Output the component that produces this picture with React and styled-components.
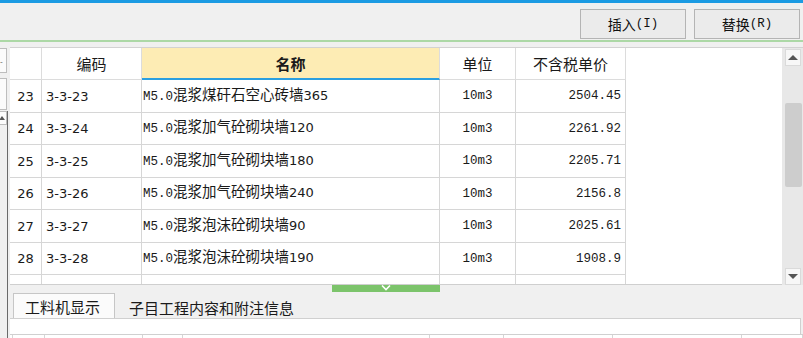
import React from "react";
import styled, { createGlobalStyle } from "styled-components";

const Global = createGlobalStyle`
  html, body { margin: 0; padding: 0; background: #f0f0f0; }
  body { font-family: "Noto Sans CJK SC", "Noto Sans", sans-serif; }
`;

const Page = styled.div`
  width: 803px;
  height: 338px;
  overflow: hidden;
  background: #f0f0f0;
  display: flex;
  flex-direction: column;
`;

const TopBar = styled.div`
  height: 3px;
  background: #1b9be3;
`;

const Toolbar = styled.div`
  height: 39px;
  display: flex;
  justify-content: flex-end;
  align-items: center;
  gap: 8px;
  padding-right: 3px;
  border-bottom: 2px solid #acd8a6;
  box-sizing: border-box;
`;

const ToolButton = styled.button`
  width: 106px;
  height: 30px;
  margin-top: 4px;
  background: #ebebeb;
  border: 1px solid #b4b4b4;
  font-family: "Noto Sans CJK SC", sans-serif;
  font-size: 14px;
  color: #111;
  padding: 0;
  display: flex;
  align-items: center;
  justify-content: center;
`;

const Mono = styled.span`
  font-family: "Liberation Mono", monospace;
  font-size: 12.5px;
`;

const Digits = styled.span`
  font-family: "DejaVu Sans", sans-serif;
  font-size: 13px;
`;

const Body = styled.div`
  flex: 1;
  display: flex;
  padding-top: 5px;
`;

const LeftStrip = styled.div`
  width: 10px;
  display: flex;
  flex-direction: column;
  gap: 5px;
  padding-top: 1px;
`;

const StripBox = styled.div`
  width: 7px;
  height: ${({ h }) => h}px;
  background: #fbfbfb;
  border: 1px solid #bdbdbd;
  border-left: none;
  box-sizing: border-box;
  color: #555;
  font-size: 8px;
  line-height: ${({ h }) => h}px;
  overflow: hidden;
`;

const StripRail = styled.div`
  flex: 1;
  width: 8px;
  border-right: 1px solid #6a6a6a;
  box-sizing: border-box;
  margin-top: -4px;
`;

const RailArrow = styled.div`
  width: 7px;
  height: 14px;
  background: #fbfbfb;
  border: 1px solid #bdbdbd;
  border-left: none;
  box-sizing: border-box;
  display: flex;
  align-items: center;
  justify-content: center;
  &::after {
    content: "";
    border-left: 3px solid transparent;
    border-right: 3px solid transparent;
    border-bottom: 4px solid #555;
    margin-left: -3px;
  }
`;

const Main = styled.div`
  flex: 1;
  display: flex;
  flex-direction: column;
`;

const GridWrap = styled.div`
  height: 238px;
  display: flex;
  border-top: 1px solid #d2d2d2;
  box-sizing: border-box;
  background: #fff;
`;

const GridBody = styled.div`
  flex: 1;
  overflow: hidden;
  border-bottom: 1px solid #cfcfcf;
`;

const cols = "32px 100px 298px 76px 110px";

const Row = styled.div`
  display: grid;
  grid-template-columns: ${cols};
  height: ${({ h }) => h}px;
`;

const Cell = styled.div`
  border-right: 1px solid #d6d6d6;
  border-bottom: 1px solid #d6d6d6;
  box-sizing: border-box;
  display: flex;
  align-items: center;
  justify-content: ${({ align }) =>
    align === "right" ? "flex-end" : align === "left" ? "flex-start" : "center"};
  padding: 0 4px;
  font-size: ${({ mono }) => (mono ? "12.5px" : "13px")};
  color: #1a1a1a;
  white-space: nowrap;
  overflow: hidden;
  font-family: ${({ mono }) =>
    mono ? '"Liberation Mono", monospace' : '"DejaVu Sans", sans-serif'};
`;

const NameCell = styled(Cell)`
  font-family: "Noto Sans CJK SC", sans-serif;
  font-size: 14.5px;
  padding-left: 1px;
  & > span {
    line-height: 1;
    margin-top: -2px;
  }
`;

const HeadCell = styled.div`
  border-right: 1px solid #dcdcdc;
  border-bottom: ${({ active }) => (active ? "2px solid #2b9fe0" : "1px solid #dcdcdc")};
  background: ${({ active }) => (active ? "#fdecb4" : "#fff")};
  box-sizing: border-box;
  display: flex;
  align-items: center;
  justify-content: center;
  font-family: "Noto Sans CJK SC", sans-serif;
  font-size: 15px;
  font-weight: ${({ active }) => (active ? 700 : 400)};
  color: #1a1a1a;
  padding-top: ${({ active }) => (active ? "1px" : "0")};
`;

const ScrollBar = styled.div`
  width: 21px;
  background: #e8e8e8;
  display: flex;
  flex-direction: column;
  align-items: center;
  padding: 1px 0 0 1px;
  box-sizing: border-box;
`;

const ScrollBtn = styled.div`
  width: 16px;
  height: 17px;
  background: #f7f7f7;
  border: 1px solid #dadada;
  box-sizing: border-box;
  display: flex;
  align-items: center;
  justify-content: center;
  &::after {
    content: "";
    border-left: 5px solid transparent;
    border-right: 5px solid transparent;
    ${({ down }) =>
      down ? "border-top: 5px solid #555;" : "border-bottom: 5px solid #555;"}
  }
`;

const Thumb = styled.div`
  width: 17px;
  height: 84px;
  margin-top: 37px;
  background: #cdcdcd;
  border-radius: 2px;
`;

const Spacer = styled.div`
  flex: 1;
`;

const Splitter = styled.div`
  height: 7px;
  display: flex;
`;

const Handle = styled.div`
  width: 108px;
  height: 7px;
  margin-left: 322px;
  background: #7cc46b;
  display: flex;
  justify-content: center;
  svg { display: block; }
`;

const TabRow = styled.div`
  height: 26px;
  display: flex;
  align-items: flex-end;
  padding-left: 3px;
  gap: 12px;
`;

const Tab = styled.div`
  height: ${({ active }) => (active ? "25px" : "24px")};
  padding: 0 ${({ active }) => (active ? "14px" : "2px")} 0 ${({ active }) => (active ? "11px" : "2px")};
  box-sizing: border-box;
  background: ${({ active }) => (active ? "#fbfbfb" : "transparent")};
  border: ${({ active }) => (active ? "1px solid #c6c6c6" : "none")};
  border-bottom: none;
  font-size: 15px;
  color: #1a1a1a;
  display: flex;
  align-items: center;
  margin-bottom: ${({ active }) => (active ? "0" : "-1px")};
`;

const Panel = styled.div`
  height: 16px;
  background: #fff;
  border-top: 1px solid #d0d0d0;
  border-right: 1px solid #d0d0d0;
  box-sizing: border-box;
  margin-right: 2px;
`;

const SubGrid = styled.div`
  flex: 1;
  display: grid;
  grid-template-columns: 3px 32px 98px 40px 247px 74px 109px 129px 1fr;
  border-top: 1px solid #d0d0d0;
  background: #fff;
`;

const SubCell = styled.div`
  border-right: 1px solid #d6d6d6;
`;

const rows = [
  ["23", "3-3-23", "混浆煤矸石空心砖墙", "365", "2504.45"],
  ["24", "3-3-24", "混浆加气砼砌块墙", "120", "2261.92"],
  ["25", "3-3-25", "混浆加气砼砌块墙", "180", "2205.71"],
  ["26", "3-3-26", "混浆加气砼砌块墙", "240", "2156.8"],
  ["27", "3-3-27", "混浆泡沫砼砌块墙", "90", "2025.61"],
  ["28", "3-3-28", "混浆泡沫砼砌块墙", "190", "1908.9"],
];

const heights = [33, 32, 33, 32, 33, 32];

export default function App() {
  return (
    <Page>
      <Global />
      <TopBar />
      <Toolbar>
        <ToolButton>
          插入<Mono>(I)</Mono>
        </ToolButton>
        <ToolButton>
          替换<Mono>(R)</Mono>
        </ToolButton>
      </Toolbar>
      <Body>
        <LeftStrip>
          <StripBox h={25}>-</StripBox>
          <StripBox h={32} />
          <StripRail>
            <RailArrow />
          </StripRail>
        </LeftStrip>
        <Main>
          <GridWrap>
            <GridBody>
              <Row h={32}>
                <HeadCell />
                <HeadCell>编码</HeadCell>
                <HeadCell active>名称</HeadCell>
                <HeadCell>单位</HeadCell>
                <HeadCell>不含税单价</HeadCell>
              </Row>
              {rows.map(([no, code, name, size, price], i) => (
                <Row key={no} h={heights[i]}>
                  <Cell>{no}</Cell>
                  <Cell align="left">{code}</Cell>
                  <NameCell align="left">
                    <span>
                      <Mono>M5.0</Mono>
                      {name}
                      <Digits>{size}</Digits>
                    </span>
                  </NameCell>
                  <Cell mono>10m3</Cell>
                  <Cell mono align="right">{price}</Cell>
                </Row>
              ))}
              <Row h={14}>
                <Cell />
                <Cell />
                <Cell />
                <Cell />
                <Cell />
              </Row>
            </GridBody>
            <ScrollBar>
              <ScrollBtn />
              <Thumb />
              <Spacer />
              <ScrollBtn down />
            </ScrollBar>
          </GridWrap>
          <Splitter>
            <Handle>
              <svg width="12" height="6" viewBox="0 0 12 6">
                <path d="M2 0.5 L6 4.5 L10 0.5" fill="none" stroke="#fff" strokeWidth="1.6" />
              </svg>
            </Handle>
          </Splitter>
          <TabRow>
            <Tab active>工料机显示</Tab>
            <Tab>子目工程内容和附注信息</Tab>
          </TabRow>
          <Panel />
          <SubGrid>
            <SubCell />
            <SubCell />
            <SubCell />
            <SubCell />
            <SubCell />
            <SubCell />
            <SubCell />
            <SubCell />
            <SubCell />
          </SubGrid>
        </Main>
      </Body>
    </Page>
  );
}
